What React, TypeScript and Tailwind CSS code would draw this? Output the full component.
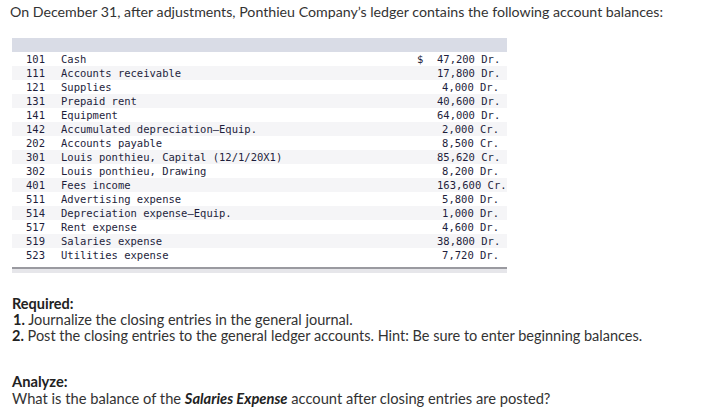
import React from "react";

const rows: [string, string, string, string][] = [
  ["101", "Cash", "$", "47,200 Dr."],
  ["111", "Accounts receivable", "", "17,800 Dr."],
  ["121", "Supplies", "", "4,000 Dr."],
  ["131", "Prepaid rent", "", "40,600 Dr."],
  ["141", "Equipment", "", "64,000 Dr."],
  ["142", "Accumulated depreciation\u2014Equip.", "", "2,000 Cr."],
  ["202", "Accounts payable", "", "8,500 Cr."],
  ["301", "Louis ponthieu, Capital (12/1/20X1)", "", "85,620 Cr."],
  ["302", "Louis ponthieu, Drawing", "", "8,200 Dr."],
  ["401", "Fees income", "", "163,600 Cr."],
  ["511", "Advertising expense", "", "5,800 Dr."],
  ["514", "Depreciation expense\u2014Equip.", "", "1,000 Dr."],
  ["517", "Rent expense", "", "4,600 Dr."],
  ["519", "Salaries expense", "", "38,800 Dr."],
  ["523", "Utilities expense", "", "7,720 Dr."],
];

export default function App() {
  return (
    <div
      className="w-[701px] h-[418px] bg-white text-[#333] overflow-hidden"
      style={{ fontFamily: "Lato, 'Open Sans', sans-serif" }}
    >
      <p className="pl-[10px] pt-[3px] text-[14.2px] leading-[18px] whitespace-nowrap">
        On December 31, after adjustments, Ponthieu Company’s ledger contains the following account balances:
      </p>
      <div className="ml-[12px] mt-[17px] w-[495px]">
        <div className="h-[14px] bg-[#d9dce6]" />
        <div
          className="text-[10.5px] leading-[14px] text-[#1e1e3c]"
          style={{ fontFamily: "'DejaVu Sans Mono', 'Liberation Mono', monospace" }}
        >
          {rows.map((r, i) => (
            <div
              key={r[0]}
              className={`flex h-[14px] items-center ${i % 2 === 1 ? "bg-[#f5f5f7]" : "bg-white"}`}
            >
              <span className="w-[49px] pl-[14px]">{r[0]}</span>
              <span className="flex-1 whitespace-pre">{r[1]}</span>
              <span className="w-[20px]">{r[2]}</span>
              <span className="w-[70px] pr-[8px] text-right whitespace-pre">{r[3]}</span>
            </div>
          ))}
        </div>
        <div className="h-[5px]" />
        <div className="h-[6px] border-t-2 border-[#9a9aa0] bg-[#e6e6ea]" />
      </div>

      <div className="mt-[23px] pl-[12px] text-[14.5px] leading-[16px] whitespace-nowrap">
        <p className="font-bold text-[#222]">Required:</p>
        <p className="pl-[1px]">
          <span className="font-bold text-[#222]">1.</span> Journalize the closing entries in the general journal.
        </p>
        <p>
          <span className="font-bold text-[#222]">2.</span> Post the closing entries to the general ledger accounts. Hint: Be sure to enter beginning balances.
        </p>
      </div>

      <div className="mt-[29px] pl-[12px] text-[14.7px] leading-[17px] whitespace-nowrap">
        <p className="font-bold text-[#222]">Analyze:</p>
        <p>
          What is the balance of the{" "}
          <span className="font-bold italic text-[#222]">Salaries Expense</span> account after closing entries are posted?
        </p>
      </div>
    </div>
  );
}
